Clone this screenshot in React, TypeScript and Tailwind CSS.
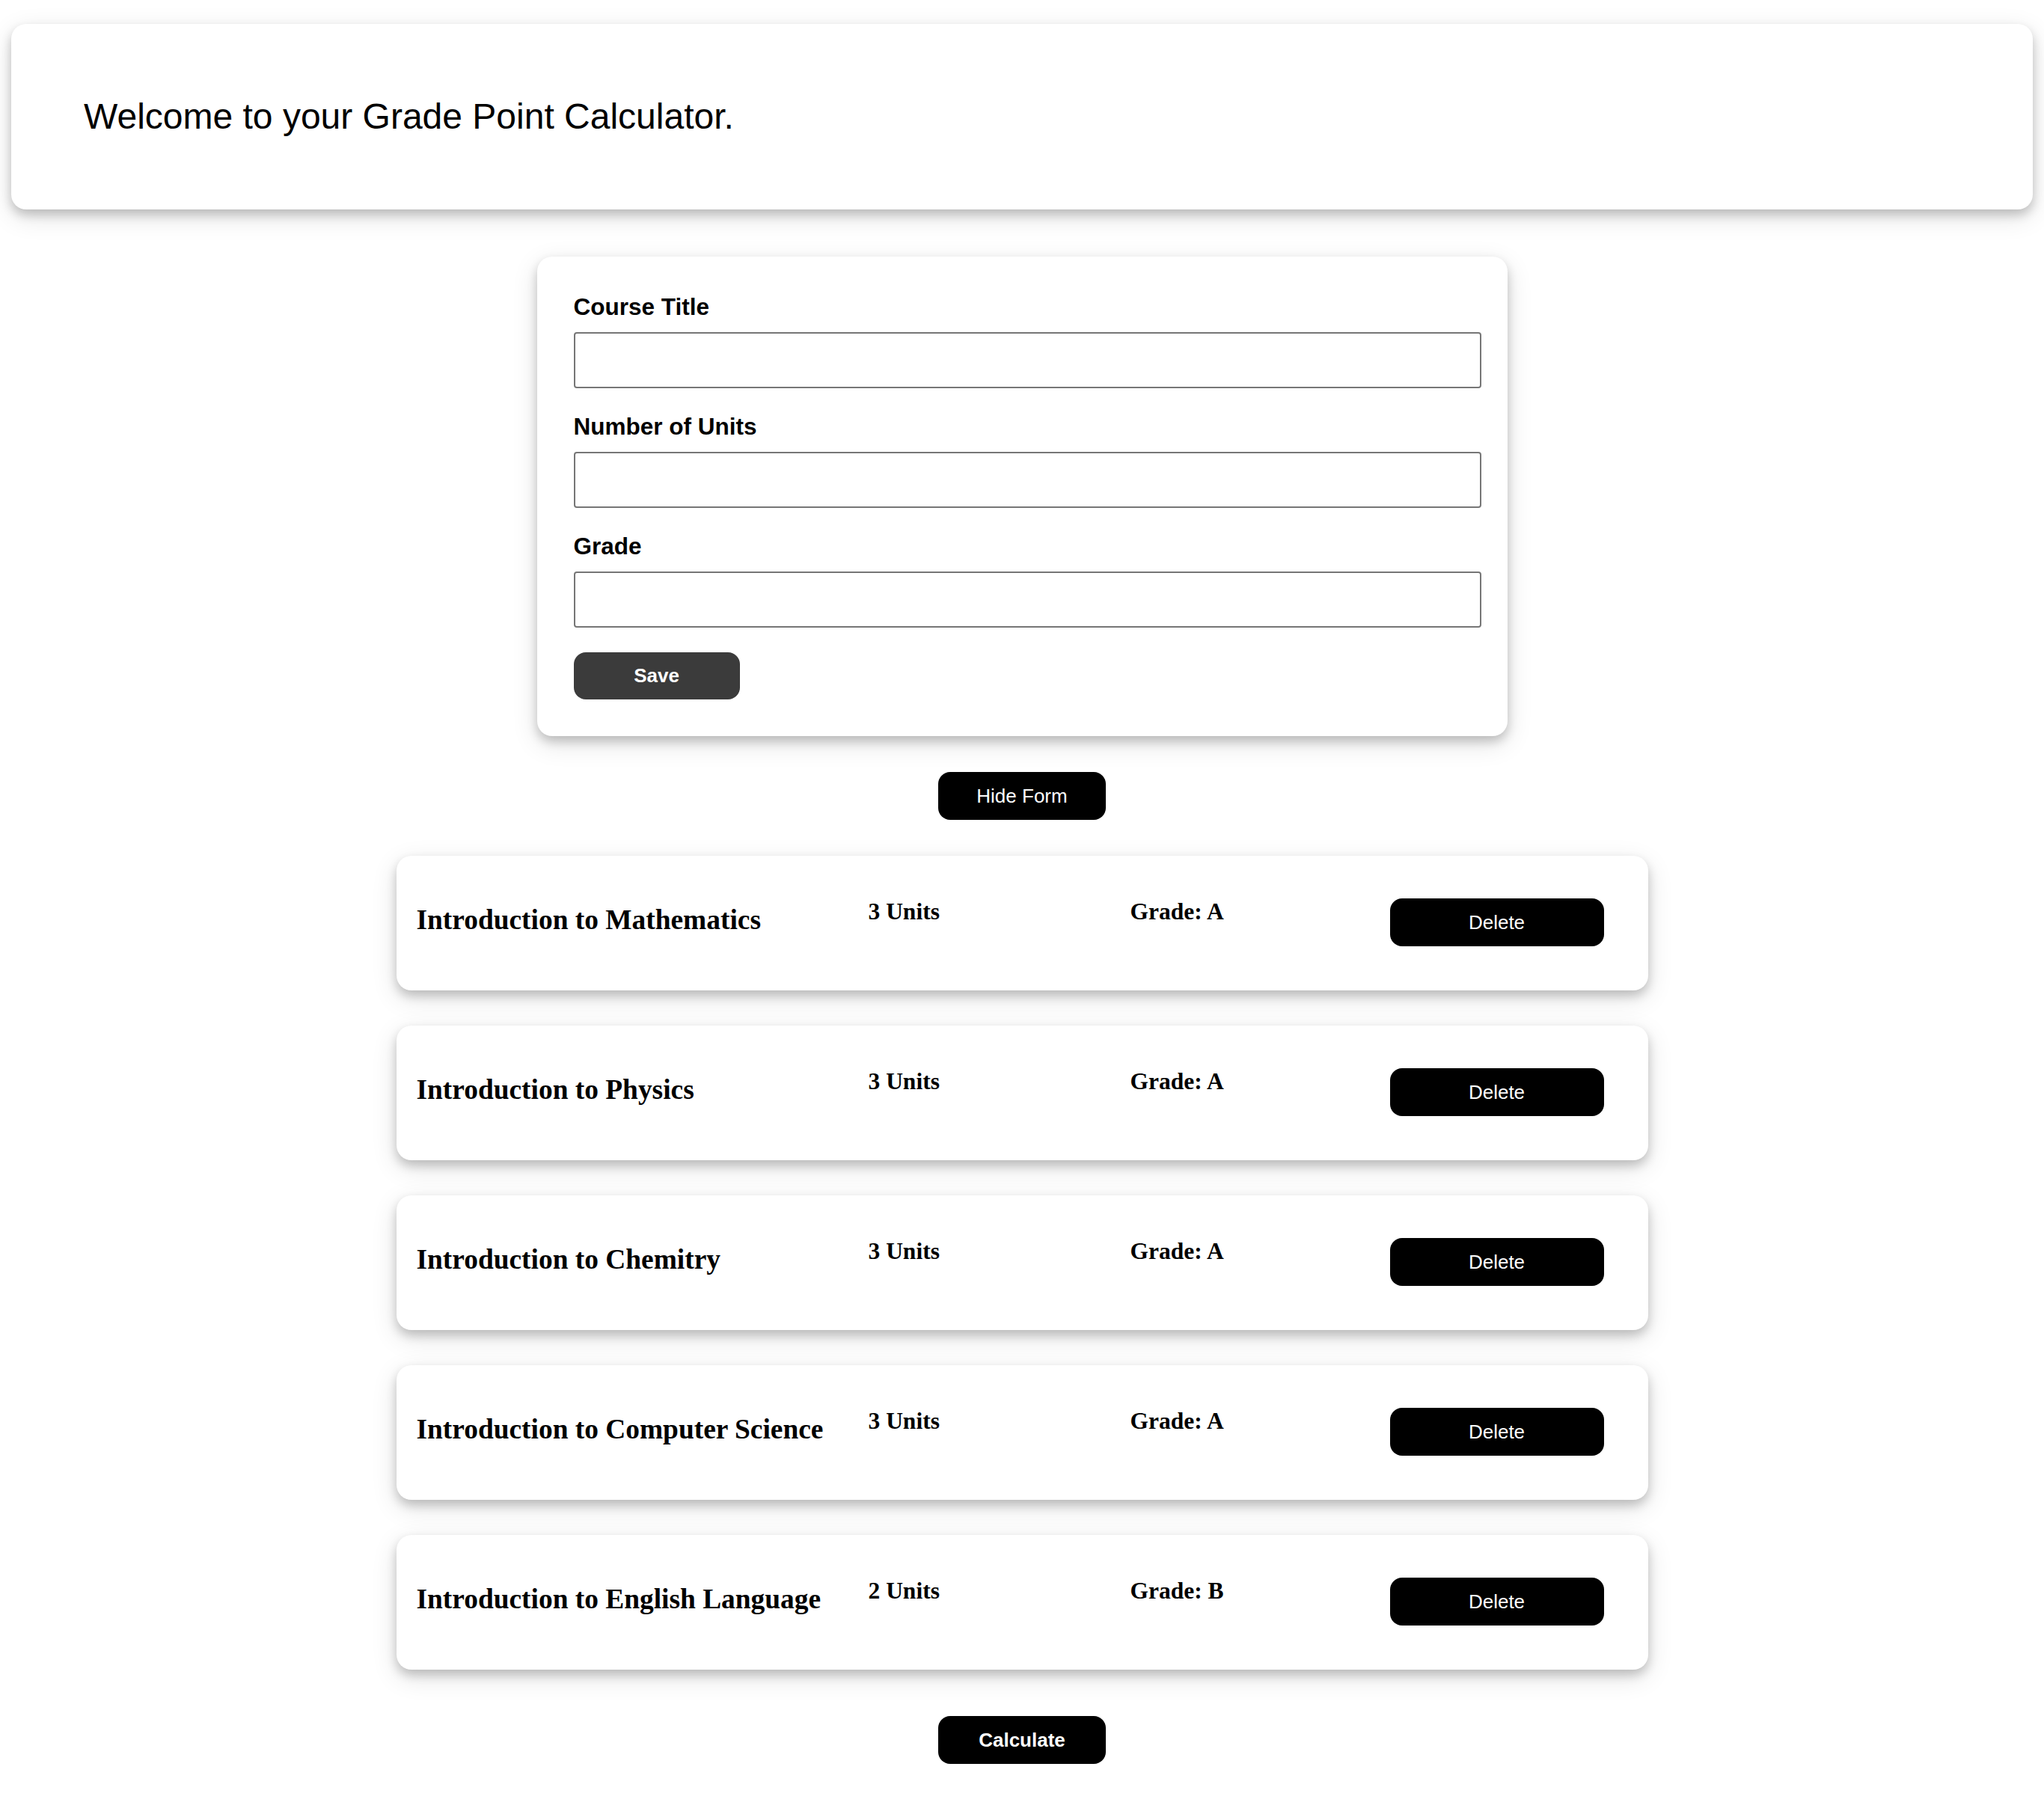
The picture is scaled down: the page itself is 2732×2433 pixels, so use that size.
import { useState } from 'react';

type Course = {
  title: string;
  units: number;
  grade: string;
};

const initialCourses: Course[] = [
  { title: 'Introduction to Mathematics', units: 3, grade: 'A' },
  { title: 'Introduction to Physics', units: 3, grade: 'A' },
  { title: 'Introduction to Chemitry', units: 3, grade: 'A' },
  { title: 'Introduction to Computer Science', units: 3, grade: 'A' },
  { title: 'Introduction to English Language', units: 2, grade: 'B' },
];

const cardShadow = 'shadow-[0_7px_14px_0_rgba(0,0,0,0.2),0_10px_35px_0_rgba(0,0,0,0.12)]';

function Field({ label }: { label: string }) {
  return (
    <div className="mb-[33px] flex flex-col">
      <label className="mb-[16px] text-[31.5px] font-bold leading-[36px] text-black">{label}</label>
      <input
        type="text"
        className="h-[75px] w-[1213px] rounded-[4px] border-2 border-[#767676] bg-white px-2 text-[26px] outline-none"
      />
    </div>
  );
}

function CourseCard({ course, onDelete }: { course: Course; onDelete: () => void }) {
  return (
    <div
      className={`flex h-[180px] w-[1673px] items-start rounded-[20px] bg-white pl-[27px] pt-[57px] ${cardShadow}`}
      style={{ fontFamily: '"Liberation Serif", "Times New Roman", serif' }}
    >
      <h3 className="mt-[7px] w-[604px] shrink-0 text-[37.4px] font-bold leading-[43px]">{course.title}</h3>
      <p className="w-[350px] shrink-0 text-[31.5px] font-bold leading-[36px]">{course.units} Units</p>
      <p className="w-[347px] shrink-0 text-[31.5px] font-bold leading-[36px]">Grade: {course.grade}</p>
      <button
        onClick={onDelete}
        className="h-[64px] w-[286px] rounded-[16px] bg-black text-[26px] text-white"
        style={{ fontFamily: '"Liberation Sans", Arial, sans-serif' }}
      >
        Delete
      </button>
    </div>
  );
}

export default function App() {
  const [courses, setCourses] = useState<Course[]>(initialCourses);
  const [showForm, setShowForm] = useState(true);

  return (
    <div
      className="min-h-[2433px] bg-white px-[15px] pt-[32px] text-black"
      style={{ fontFamily: '"Liberation Sans", Arial, sans-serif' }}
    >
      <header className={`flex h-[248px] items-center rounded-[20px] bg-white pb-[2px] pl-[97px] ${cardShadow}`}>
        <h1 className="text-[48px] font-normal leading-[55px]">Welcome to your Grade Point Calculator.</h1>
      </header>

      {showForm && (
        <form
          onSubmit={(e) => e.preventDefault()}
          className={`mx-auto mt-[63px] w-[1297px] rounded-[20px] bg-white p-[49px] ${cardShadow}`}
        >
          <Field label="Course Title" />
          <Field label="Number of Units" />
          <Field label="Grade" />
          <button type="submit" className="h-[63px] w-[222px] rounded-[16px] bg-[#3b3b3b] text-[26px] font-bold text-white">
            Save
          </button>
        </form>
      )}

      <div className="mt-[48px] flex justify-center">
        <button
          onClick={() => setShowForm(!showForm)}
          className="h-[64px] w-[224px] rounded-[16px] bg-black text-[26px] text-white"
        >
          {showForm ? 'Hide Form' : 'Show Form'}
        </button>
      </div>

      <div className="mt-[48px] flex flex-col items-center gap-[47px]">
        {courses.map((c, i) => (
          <CourseCard key={c.title} course={c} onDelete={() => setCourses(courses.filter((_, j) => j !== i))} />
        ))}
      </div>

      <div className="mt-[62px] flex justify-center">
        <button className="h-[64px] w-[224px] rounded-[16px] bg-black text-[26px] font-bold text-white">Calculate</button>
      </div>
    </div>
  );
}
